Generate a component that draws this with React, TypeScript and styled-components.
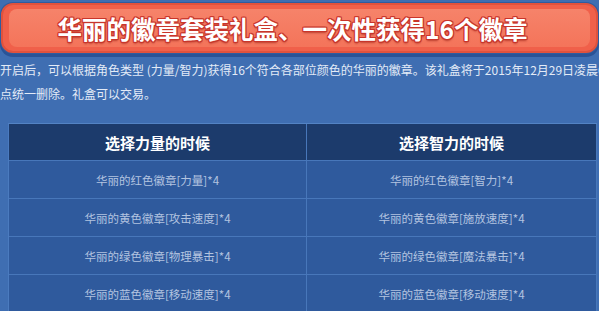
import React from "react";
import styled, { createGlobalStyle } from "styled-components";

const GlobalStyle = createGlobalStyle`
    html, body {
        margin: 0;
        padding: 0;
        background: #3f6eb2;
        overflow: hidden;
    }
    body {
        font-family: "Microsoft YaHei", "Noto Sans CJK SC", "Noto Sans", sans-serif;
    }
`;

const Page = styled.div`
    width: 599px;
    height: 311px;
    overflow: hidden;
    padding-top: 3px;
    box-sizing: border-box;
`;

const Banner = styled.div`
    box-sizing: border-box;
    width: 597px;
    height: 50px;
    margin-left: 1px;
    border-radius: 12px;
    background: #f0604a;
    border: 2px solid #e0523d;
    box-shadow: 0 0 0 1px #2f5c9f, 0 3px 0 1px #2a5396;
    padding: 4px 6px;
`;

const BannerInner = styled.div`
    height: 100%;
    border-radius: 8px;
    background: linear-gradient(180deg, #f6836a 0%, #f4745a 100%);
    display: flex;
    align-items: center;
    justify-content: center;
    padding-right: 14px;
`;

const Title = styled.h1`
    margin: 0;
    font-size: 24.5px;
    font-weight: 700;
    color: #ffffff;
    text-shadow:
        1px 0 0 #c9352b,
        -1px 0 0 #c9352b,
        0 1px 0 #c9352b,
        0 -1px 0 #c9352b,
        1px 1px 0 #c9352b,
        -1px -1px 0 #c9352b,
        1px -1px 0 #c9352b,
        -1px 1px 0 #c9352b,
        0 2px 2px rgba(150, 30, 20, 0.6);
`;

const Intro = styled.p`
    width: 611px;
    margin: 5px 0 17px 0;
    font-size: 12px;
    line-height: 24px;
    color: #e3ebf7;
`;

const Table = styled.div`
    margin-left: 8px;
    width: 589px;
    display: grid;
    grid-template-columns: 298px 1fr;
    border-top: 1px solid #5383c4;
    border-left: 1px solid #4b7bbf;
    box-sizing: border-box;
`;

const Cell = styled.div<{ $head?: boolean }>`
    height: ${p => (p.$head ? "37px" : "38px")};
    display: flex;
    align-items: center;
    justify-content: center;
    background: ${p => (p.$head ? "#1c3b6c" : "#2f5a9d")};
    border-right: 1px solid #4877ba;
    border-bottom: 1px solid #4877ba;
    font-size: ${p => (p.$head ? "15px" : "11.5px")};
    font-weight: ${p => (p.$head ? 700 : 400)};
    color: ${p => (p.$head ? "#ffffff" : "#b3c4e0")};
    box-sizing: border-box;
`;

const rows = [
    ["华丽的红色徽章[力量]*4", "华丽的红色徽章[智力]*4"],
    ["华丽的黄色徽章[攻击速度]*4", "华丽的黄色徽章[施放速度]*4"],
    ["华丽的绿色徽章[物理暴击]*4", "华丽的绿色徽章[魔法暴击]*4"],
    ["华丽的蓝色徽章[移动速度]*4", "华丽的蓝色徽章[移动速度]*4"],
];

export default function App() {
    return (
        <>
            <GlobalStyle />
            <Page>
                <Banner>
                    <BannerInner>
                        <Title>华丽的徽章套装礼盒、一次性获得16个徽章</Title>
                    </BannerInner>
                </Banner>
                <Intro>
                    开启后，可以根据角色类型 (力量/智力)获得16个符合各部位颜色的华丽的徽章。该礼盒将于2015年12月29日凌晨6点统一删除。礼盒可以交易。
                </Intro>
                <Table>
                    <Cell $head>选择力量的时候</Cell>
                    <Cell $head>选择智力的时候</Cell>
                    {rows.map(([a, b], i) => (
                        <React.Fragment key={i}>
                            <Cell>{a}</Cell>
                            <Cell>{b}</Cell>
                        </React.Fragment>
                    ))}
                </Table>
            </Page>
        </>
    );
}
